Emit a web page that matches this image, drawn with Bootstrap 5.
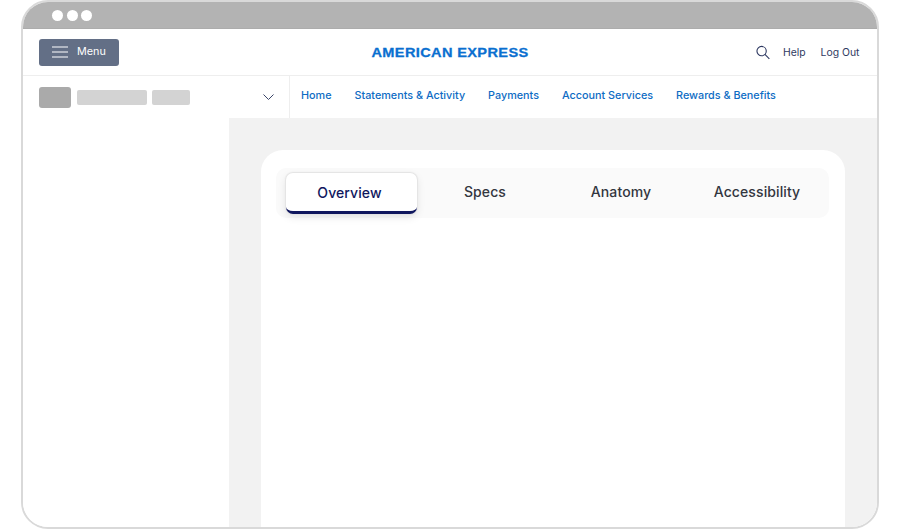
<!DOCTYPE html>
<html lang="en">
<head>
<meta charset="utf-8">
<title>American Express</title>
<link href="https://cdn.jsdelivr.net/npm/bootstrap@5.3.0/dist/css/bootstrap.min.css" rel="stylesheet">
<style>
html,body{height:529px;overflow:hidden;background:#fff;font-family:Inter,"Liberation Sans",sans-serif}
.frame{width:858px;height:529px;margin-left:21px;border:2.5px solid #d9d9d9;border-radius:27px;overflow:hidden;background:#fff}
.titlebar{height:27px;background:#b3b3b3;padding-left:29px;gap:3.5px;border-bottom:1px solid #acacac}
.dot{width:11px;height:11px;border-radius:50%;background:#fff}
.tophead{height:47px;padding:0 17.5px 0 16px;border-bottom:1px solid #eee}
.menubtn{width:80px;height:27px;background:#636f86;border-radius:3px;color:#fff;font-size:10.8px;padding-left:13px;gap:9px}
.logo{font-family:"Liberation Sans",sans-serif;font-weight:700;font-size:13.6px;letter-spacing:.35px;color:#0a6fd0;transform:scaleX(1.07);-webkit-text-stroke:.3px #0a6fd0;white-space:nowrap}
.logowrap{position:absolute;left:50%;transform:translateX(-50%);top:0;padding-top:3px}
.headlinks{font-size:10.4px;color:#2f3a62;gap:13px;padding-top:2px}
.logoutlink{margin-left:2px}
.subhead{height:42px}
.acct{width:267px;height:100%;padding:0 15px 0 16px;border-right:1px solid #eee;gap:5.5px}
.sk{height:15px;border-radius:2px;background:#d3d3d3}
.sk-a{width:32px;height:21px;border-radius:3px;background:#aaa}
.sk-b{width:70px}.sk-c{width:38px}
.mainnav{font-size:10.8px;font-weight:500;padding:0 0 2px 11px;gap:23px}
.mainnav a{color:#0e6cc4;text-decoration:none}
.body-area{min-height:0}
.leftside{width:206px;background:#fff}
.canvas{background:#f2f2f2;padding:32px 32px 0}
.panel{background:#fff;border-radius:22px 22px 0 0;height:100%;padding:18px 16px 0 15px}
.tabstrip{height:50px;background:#fafafa;border-radius:10px;padding:4px 0 0 9px}
.tabx{width:136px;height:42px;font-size:14px;font-weight:500;color:#33363f;padding-bottom:3px;letter-spacing:.1px}
.tabx.is-on{width:131px;height:41px;margin:1px .5px 0;padding:0 3px 0 0;background:#fff;color:#10175e;border-radius:7px;border-bottom:3px solid #10175e;box-shadow:0 0 1px 1px #e4e4e4,0 3px 9px rgba(0,0,0,.1)}
</style>
</head>
<body>
<div class="frame d-flex flex-column position-relative">
  <div class="titlebar d-flex align-items-center flex-shrink-0">
    <span class="dot"></span><span class="dot"></span><span class="dot"></span>
  </div>
  <div class="tophead d-flex align-items-center justify-content-between flex-shrink-0 position-relative">
    <div class="menubtn d-flex align-items-center">
      <svg width="16" height="12" viewBox="0 0 16 12" fill="none" stroke="#fff" stroke-width="1.2"><path d="M0 1h16M0 6h16M0 11h16"/></svg>
      <span>Menu</span>
    </div>
    <div class="logowrap h-100 d-flex align-items-center"><span class="logo">AMERICAN EXPRESS</span></div>
    <div class="headlinks d-flex align-items-center">
      <svg width="14" height="15" viewBox="0 0 15 15" fill="none" stroke="#2f3a62" stroke-width="1.2"><circle cx="6" cy="6" r="5"/><path d="M9.6 9.6 14.3 14.3"/></svg>
      <span>Help</span>
      <span class="logoutlink">Log Out</span>
    </div>
  </div>
  <div class="subhead d-flex align-items-center flex-shrink-0">
    <div class="acct d-flex align-items-center">
      <span class="sk sk-a"></span><span class="sk sk-b"></span><span class="sk sk-c"></span>
      <svg class="ms-auto" width="11" height="6" viewBox="0 0 11 6" fill="none" stroke="#3a4568" stroke-width="1"><path d="M.5.5 5.5 5.5 10.5.5"/></svg>
    </div>
    <nav class="mainnav d-flex align-items-center">
      <a href="#">Home</a><a href="#">Statements &amp; Activity</a><a href="#">Payments</a><a href="#">Account Services</a><a href="#">Rewards &amp; Benefits</a>
    </nav>
  </div>
  <div class="body-area d-flex flex-grow-1">
    <div class="leftside flex-shrink-0"></div>
    <div class="canvas flex-grow-1">
      <div class="panel">
        <div class="tabstrip d-flex">
          <div class="tabx is-on d-flex align-items-center justify-content-center">Overview</div>
          <div class="tabx d-flex align-items-center justify-content-center">Specs</div>
          <div class="tabx d-flex align-items-center justify-content-center">Anatomy</div>
          <div class="tabx d-flex align-items-center justify-content-center">Accessibility</div>
        </div>
      </div>
    </div>
  </div>
</div>
<script src="https://cdn.jsdelivr.net/npm/bootstrap@5.3.0/dist/js/bootstrap.bundle.min.js"></script>
</body>
</html>
